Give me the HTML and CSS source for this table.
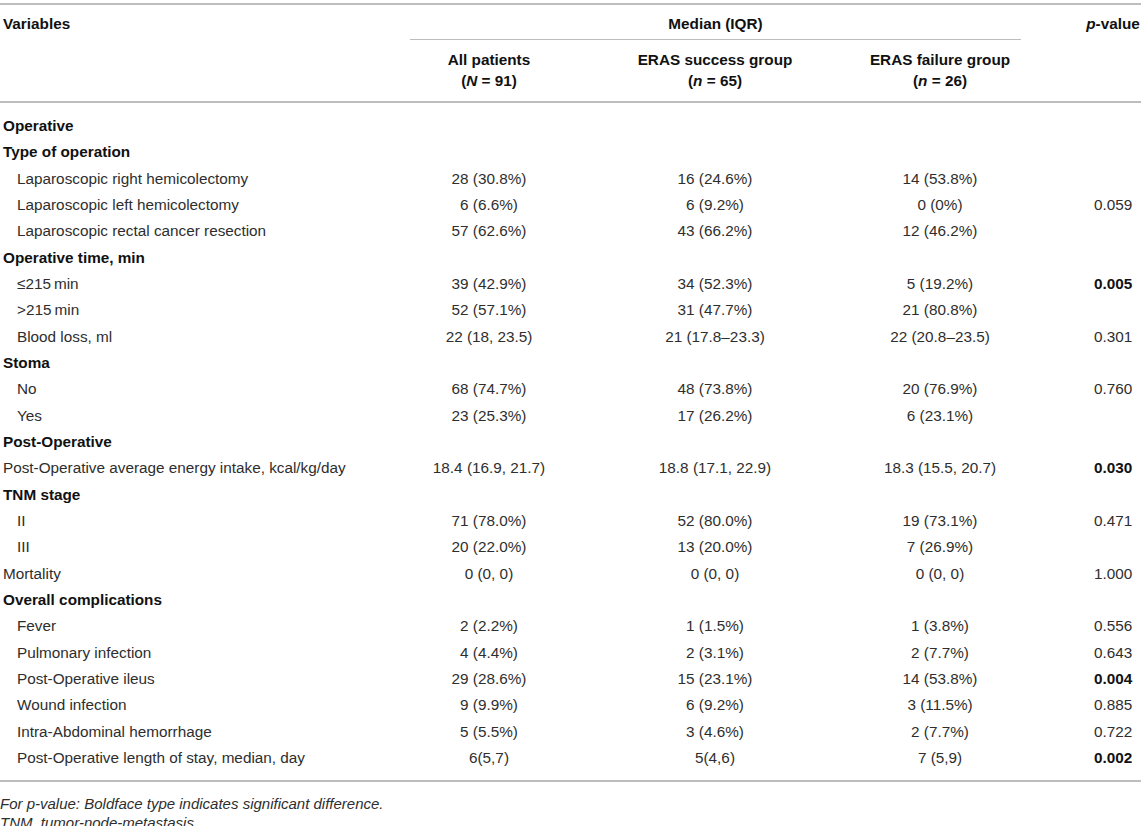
FILE: index.html
```html
<!DOCTYPE html>
<html lang="en">
<head>
<meta charset="utf-8">
<title>Table</title>
<link rel="stylesheet" href="styles.css">
</head>
<body>
<div class="wrap">
<table class="tbl">
  <colgroup>
    <col class="c-label">
    <col class="c-all">
    <col class="c-succ">
    <col class="c-fail">
    <col class="c-p">
  </colgroup>
  <thead>
    <tr class="h1">
      <th class="lab">Variables</th>
      <th colspan="3" class="median"><div class="median-inner">Median (IQR)</div></th>
      <th class="pv"><i>p</i>-value</th>
    </tr>
    <tr class="h2">
      <th></th>
      <th>All patients<br>(<i>N</i> = 91)</th>
      <th>ERAS success group<br>(<i>n</i> = 65)</th>
      <th>ERAS failure group<br>(<i>n</i> = 26)</th>
      <th></th>
    </tr>
  </thead>
  <tbody>
    <tr class="first"><td class="sec">Operative</td><td></td><td></td><td></td><td></td></tr>
    <tr><td class="sec">Type of operation</td><td></td><td></td><td></td><td></td></tr>
    <tr><td class="sub">Laparoscopic right hemicolectomy</td><td>28 (30.8%)</td><td>16 (24.6%)</td><td>14 (53.8%)</td><td></td></tr>
    <tr><td class="sub">Laparoscopic left hemicolectomy</td><td>6 (6.6%)</td><td>6 (9.2%)</td><td>0 (0%)</td><td>0.059</td></tr>
    <tr><td class="sub">Laparoscopic rectal cancer resection</td><td>57 (62.6%)</td><td>43 (66.2%)</td><td>12 (46.2%)</td><td></td></tr>
    <tr><td class="sec">Operative time, min</td><td></td><td></td><td></td><td></td></tr>
    <tr><td class="sub">&le;215&thinsp;min</td><td>39 (42.9%)</td><td>34 (52.3%)</td><td>5 (19.2%)</td><td class="sig">0.005</td></tr>
    <tr><td class="sub">&gt;215&thinsp;min</td><td>52 (57.1%)</td><td>31 (47.7%)</td><td>21 (80.8%)</td><td></td></tr>
    <tr><td class="sub">Blood loss, ml</td><td>22 (18, 23.5)</td><td>21 (17.8&ndash;23.3)</td><td>22 (20.8&ndash;23.5)</td><td>0.301</td></tr>
    <tr><td class="sec">Stoma</td><td></td><td></td><td></td><td></td></tr>
    <tr><td class="sub">No</td><td>68 (74.7%)</td><td>48 (73.8%)</td><td>20 (76.9%)</td><td>0.760</td></tr>
    <tr><td class="sub">Yes</td><td>23 (25.3%)</td><td>17 (26.2%)</td><td>6 (23.1%)</td><td></td></tr>
    <tr><td class="sec">Post-Operative</td><td></td><td></td><td></td><td></td></tr>
    <tr><td class="plain">Post-Operative average energy intake, kcal/kg/day</td><td>18.4 (16.9, 21.7)</td><td>18.8 (17.1, 22.9)</td><td>18.3 (15.5, 20.7)</td><td class="sig">0.030</td></tr>
    <tr><td class="sec">TNM stage</td><td></td><td></td><td></td><td></td></tr>
    <tr><td class="sub">II</td><td>71 (78.0%)</td><td>52 (80.0%)</td><td>19 (73.1%)</td><td>0.471</td></tr>
    <tr><td class="sub">III</td><td>20 (22.0%)</td><td>13 (20.0%)</td><td>7 (26.9%)</td><td></td></tr>
    <tr><td class="plain">Mortality</td><td>0 (0, 0)</td><td>0 (0, 0)</td><td>0 (0, 0)</td><td>1.000</td></tr>
    <tr><td class="sec">Overall complications</td><td></td><td></td><td></td><td></td></tr>
    <tr><td class="sub">Fever</td><td>2 (2.2%)</td><td>1 (1.5%)</td><td>1 (3.8%)</td><td>0.556</td></tr>
    <tr><td class="sub">Pulmonary infection</td><td>4 (4.4%)</td><td>2 (3.1%)</td><td>2 (7.7%)</td><td>0.643</td></tr>
    <tr><td class="sub">Post-Operative ileus</td><td>29 (28.6%)</td><td>15 (23.1%)</td><td>14 (53.8%)</td><td class="sig">0.004</td></tr>
    <tr><td class="sub">Wound infection</td><td>9 (9.9%)</td><td>6 (9.2%)</td><td>3 (11.5%)</td><td>0.885</td></tr>
    <tr><td class="sub">Intra-Abdominal hemorrhage</td><td>5 (5.5%)</td><td>3 (4.6%)</td><td>2 (7.7%)</td><td>0.722</td></tr>
    <tr class="last"><td class="sub">Post-Operative length of stay, median, day</td><td>6(5,7)</td><td>5(4,6)</td><td>7 (5,9)</td><td class="sig">0.002</td></tr>
  </tbody>
</table>
<div class="notes">
  <p>For p-value: Boldface type indicates significant difference.</p>
  <p>TNM, tumor-node-metastasis.</p>
</div>
</div>
</body>
</html>
```
FILE: styles.css
```css
html, body {
  margin: 0;
  padding: 0;
  background: #ffffff;
}

.wrap {
  width: 1141px;
  padding-top: 3px;
  font-family: "Liberation Sans", Arial, sans-serif;
  font-size: 15.3px;
  color: #2e2e2e;
}

.tbl {
  width: 1141px;
  border-collapse: collapse;
  table-layout: fixed;
  border-top: 2px solid #bdbdbd;
  border-bottom: 2px solid #bdbdbd;
}

.c-label { width: 343px; }
.c-all { width: 292px; }
.c-succ { width: 160px; }
.c-fail { width: 290px; }
.c-p { width: 56px; }

.tbl th {
  font-weight: bold;
  color: #111;
  padding: 0;
  text-align: center;
  vertical-align: middle;
  white-space: nowrap;
}

.tbl thead tr.h1 th {
  height: 35px;
  vertical-align: top;
  padding-top: 10px;
  box-sizing: border-box;
}

.tbl thead tr.h1 th.lab {
  text-align: left;
  padding-left: 3px;
}

.tbl thead tr.h1 th.median {
  padding-top: 0;
}

.median-inner {
  margin: 0 64px 0 67px;
  padding-top: 10px;
  height: 35px;
  box-sizing: border-box;
  border-bottom: 1.5px solid #bdbdbd;
}

.tbl thead tr.h2 th {
  height: 60px;
  line-height: 21px;
  border-bottom: 2px solid #bdbdbd;
  padding-bottom: 1px;
}

.tbl td {
  height: 26.33px;
  padding: 0;
  text-align: center;
  vertical-align: middle;
  white-space: nowrap;
}

.tbl tbody tr.first td {
  padding-top: 10px;
}

.tbl tbody tr.last td {
  padding-bottom: 9px;
}

.tbl td.sec {
  text-align: left;
  font-weight: bold;
  color: #111;
  padding-left: 3px;
}

.tbl td.plain {
  text-align: left;
  padding-left: 3px;
}

.tbl td.sub {
  text-align: left;
  padding-left: 17px;
}

.tbl td.sig {
  font-weight: bold;
  color: #111;
}

.notes {
  font-size: 15px;
  font-style: italic;
  color: #2e2e2e;
  padding-top: 12px;
}

.notes p {
  margin: 0;
  line-height: 19px;
}
```
